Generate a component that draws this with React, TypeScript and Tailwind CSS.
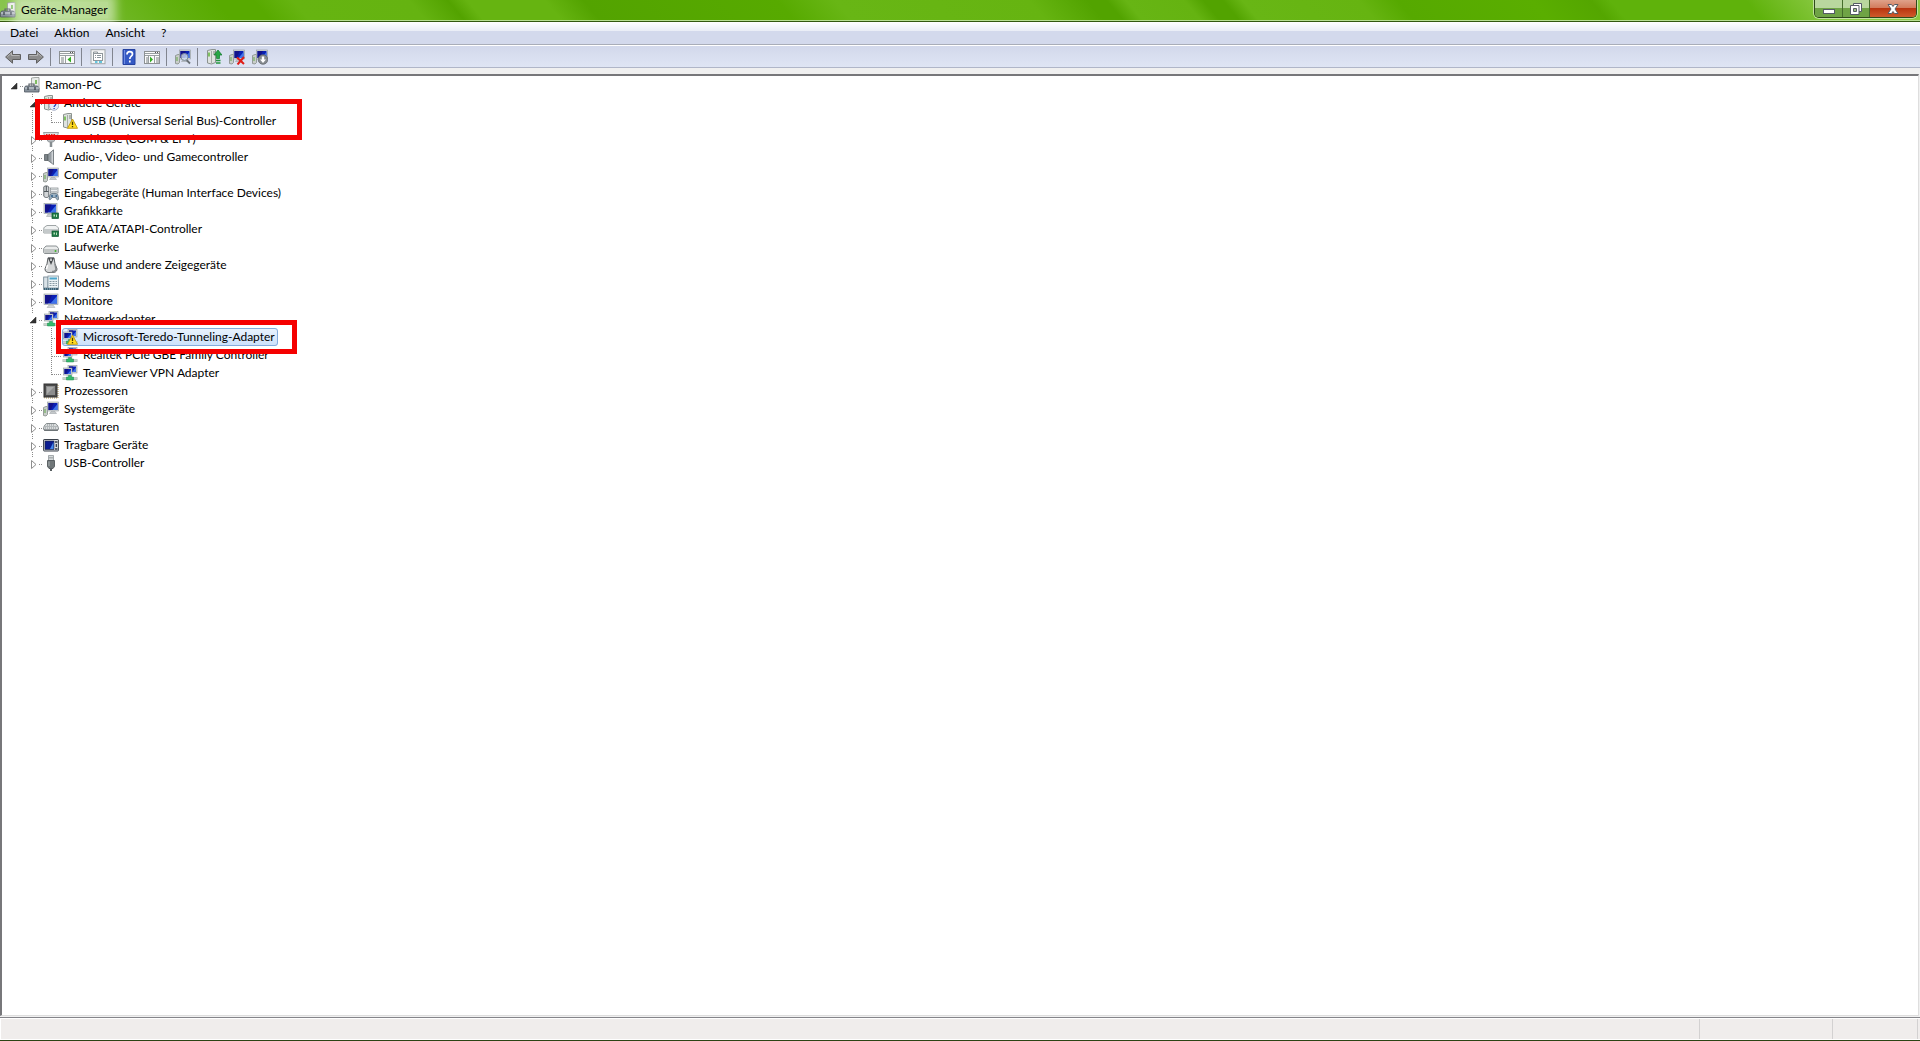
import React from 'react';

type IconName =
    | 'root' | 'unknown' | 'unknownWarn' | 'port' | 'audio' | 'computer' | 'hid' | 'display' | 'ide' | 'drive'
    | 'mouse' | 'modem' | 'monitor' | 'network' | 'networkWarn' | 'cpu' | 'keyboard' | 'portable' | 'usb'
    | 'back' | 'forward' | 'treePane' | 'properties' | 'help' | 'actionPane' | 'scan' | 'update' | 'uninstall' | 'disable';

interface TreeNode {
    label: string;
    icon: IconName;
    level: number;
    state?: 'open' | 'closed';
    last?: boolean;
    selected?: boolean;
    mark?: 'wide' | 'narrow';
}

const nodes: TreeNode[] = [
    { label: 'Ramon-PC', icon: 'root', level: 0, state: 'open' },
    { label: 'Andere Geräte', icon: 'unknown', level: 1, state: 'open' },
    { label: 'USB (Universal Serial Bus)-Controller', icon: 'unknownWarn', level: 2, last: true, mark: 'wide' },
    { label: 'Anschlüsse (COM & LPT)', icon: 'port', level: 1, state: 'closed' },
    { label: 'Audio-, Video- und Gamecontroller', icon: 'audio', level: 1, state: 'closed' },
    { label: 'Computer', icon: 'computer', level: 1, state: 'closed' },
    { label: 'Eingabegeräte (Human Interface Devices)', icon: 'hid', level: 1, state: 'closed' },
    { label: 'Grafikkarte', icon: 'display', level: 1, state: 'closed' },
    { label: 'IDE ATA/ATAPI-Controller', icon: 'ide', level: 1, state: 'closed' },
    { label: 'Laufwerke', icon: 'drive', level: 1, state: 'closed' },
    { label: 'Mäuse und andere Zeigegeräte', icon: 'mouse', level: 1, state: 'closed' },
    { label: 'Modems', icon: 'modem', level: 1, state: 'closed' },
    { label: 'Monitore', icon: 'monitor', level: 1, state: 'closed' },
    { label: 'Netzwerkadapter', icon: 'network', level: 1, state: 'open' },
    { label: 'Microsoft-Teredo-Tunneling-Adapter', icon: 'networkWarn', level: 2, selected: true, mark: 'narrow' },
    { label: 'Realtek PCIe GBE Family Controller', icon: 'network', level: 2 },
    { label: 'TeamViewer VPN Adapter', icon: 'network', level: 2, last: true },
    { label: 'Prozessoren', icon: 'cpu', level: 1, state: 'closed' },
    { label: 'Systemgeräte', icon: 'computer', level: 1, state: 'closed' },
    { label: 'Tastaturen', icon: 'keyboard', level: 1, state: 'closed' },
    { label: 'Tragbare Geräte', icon: 'portable', level: 1, state: 'closed' },
    { label: 'USB-Controller', icon: 'usb', level: 1, state: 'closed', last: true },
];

const toolbar: { label: string; icon: IconName }[][] = [
    [{ label: 'Zurück', icon: 'back' }, { label: 'Vorwärts', icon: 'forward' }],
    [{ label: 'Konsolenstruktur ein-/ausblenden', icon: 'treePane' }],
    [{ label: 'Eigenschaften', icon: 'properties' }],
    [{ label: 'Hilfe', icon: 'help' }, { label: 'Aktionsbereich ein-/ausblenden', icon: 'actionPane' }],
    [{ label: 'Nach geänderter Hardware suchen', icon: 'scan' }],
    [
        { label: 'Treibersoftware aktualisieren', icon: 'update' },
        { label: 'Deinstallieren', icon: 'uninstall' },
        { label: 'Deaktivieren', icon: 'disable' },
    ],
];

const menus = ['Datei', 'Aktion', 'Ansicht', '?'];

/* Shared icon parts */

const Screen = ({ x, y, w, h }: { x: number; y: number; w: number; h: number }) => (
    <g>
        <rect x={x} y={y} width={w} height={h} fill="#d4d8da" stroke="#92999d" strokeWidth=".6" />
        <rect x={x + 1} y={y + 1} width={w - 2} height={h - 2} fill="#0a20b4" />
        <path d={`M${x + 1} ${y + 1}h${(w - 2) * 0.6}l-${(w - 2) * 0.35} ${h - 2}h-${(w - 2) * 0.25}z`} fill="#12128a" />
        <path d={`M${x + w - 1} ${y + 2}v${h - 3}h-${(w - 2) * 0.55}z`} fill="#3f74ea" />
    </g>
);

const Tower = () => (
    <g>
        <path d="M1.500 1.500L6 .5h3.500v13l-4 1.500-4-1z" fill="#dfe3e0" stroke="#8c938f" />
        <path d="M5.500 2v12.500" stroke="#a5aca8" />
        <path d="M3 3.500v4" stroke="#5fb637" strokeWidth="1.500" />
        <path d="M7 3h2M7 5h2" stroke="#7e8782" />
    </g>
);

const MiniTower = () => (
    <g>
        <path d="M.5 6.500L3 5.500h1.500v8l-1.500 1.500-2.500-.5z" fill="#c9ceca" stroke="#848b87" strokeWidth=".8" />
        <path d="M2 8v4" stroke="#62a84b" />
    </g>
);

const Warning = () => (
    <g>
        <path d="M10.500 6L15.500 15.300h-10z" fill="#ffdc22" stroke="#c39a10" strokeWidth=".9" strokeLinejoin="round" />
        <path d="M10.500 8.800v3.200M10.500 13v1.200" stroke="#4a3a00" strokeWidth="1.300" />
    </g>
);

const Chip = () => (
    <g>
        <rect x="9" y="10" width="6.500" height="5.500" fill="#1e7b46" stroke="#0f5730" strokeWidth=".7" />
        <path d="M10.500 11.500h1.500v2h-1.500zM13 11.500h1v2.500h-1z" fill="#b8e0ba" />
    </g>
);

const Network = () => (
    <g>
        <Screen x={6} y={0.5} w={9} h={7.5} />
        <Screen x={1.5} y={3} w={8.5} h={7} />
        <path d="M4 11h5l-1-1H5z" fill="#c3c8ca" />
        <path d="M.5 13.500h15" stroke="#a3b0a8" strokeWidth="2.500" />
        <path d="M.5 13.200h15" stroke="#d8e4dc" />
        <path d="M6.500 10.500h3v1.500h2v3h-7v-3h2z" fill="#35b96c" stroke="#1d8c4c" strokeWidth=".5" />
    </g>
);

const Pane = () => (
    <g>
        <rect x=".5" y="2.500" width="15" height="12" fill="#fbfbfb" stroke="#8d9193" />
        <path d="M1 4.500h14M1 6.500h14" stroke="#999fa2" />
        <path d="M11 3.500h1M13 3.500h1" stroke="#555" />
    </g>
);

const System = () => (
    <g>
        <MiniTower />
        <Screen x={4.5} y={1} w={11} h={9} />
        <path d="M8 10.500h4l1.500 2h-7z" fill="#c4c9cb" stroke="#959b9e" strokeWidth=".5" />
    </g>
);

const art: Record<IconName, React.ReactNode> = {
    root: (
        <g>
            <path d="M7.500 1L11 .5h4v13H7.500z" fill="#e9ece9" stroke="#8f9691" strokeWidth=".8" />
            <path d="M11 3h2v4h-2z" fill="#7fbd61" />
            <path d="M5 9V7h5v2" fill="none" stroke="#5d646b" strokeWidth="1.200" />
            <path d="M1.500 9h12l1.500 2v4H.5v-4z" fill="#87919b" stroke="#4e5760" strokeWidth=".8" />
            <path d="M1 11h14" stroke="#d5dce2" />
            <path d="M4 10v3M11 10v3" stroke="#3e464e" strokeWidth="1.300" />
        </g>
    ),
    unknown: (
        <g>
            <Tower />
            <circle cx="11" cy="10.500" r="4.800" fill="#e4e9fa" stroke="#98a2bd" strokeWidth=".8" />
            <path d="M9.300 9c0-2.500 3.700-2.200 3.500 0 0 1.500-1.700 1.300-1.700 3M11.100 13v1" fill="none" stroke="#2540b5" strokeWidth="1.300" />
        </g>
    ),
    unknownWarn: <g><Tower /><Warning /></g>,
    port: (
        <g>
            <path d="M.5 1.500h15l-1.500 4.500H2z" fill="#dce0e1" stroke="#858b8e" strokeWidth=".8" />
            <path d="M3 3.500h10" stroke="#d32d26" strokeDasharray="1.500 1" />
            <path d="M4.500 6h7v4l-1.500 1H6l-1.500-1z" fill="#b7bdc0" stroke="#7c8386" strokeWidth=".7" />
            <path d="M8 11v5" stroke="#868d90" strokeWidth="2.500" />
        </g>
    ),
    audio: (
        <g>
            <path d="M1.500 5.500H5v6H1.500z" fill="#7c8388" stroke="#4c5358" strokeWidth=".7" />
            <path d="M5 5.500L10.500.8v14.800L5 11.500z" fill="#969da2" stroke="#596166" strokeWidth=".7" />
            <path d="M8.500 3l1.500-1v13l-1.500-2z" fill="#cfd4d7" />
        </g>
    ),
    computer: <System />,
    hid: (
        <g>
            <path d="M.8 2c0-1.500 4.500-1.500 5 0v9c0 2-4.500 2-5 0z" fill="#d3d6d8" stroke="#53595d" strokeWidth=".9" />
            <path d="M3.300 1v5M1 6.500h4.500" stroke="#4f565a" />
            <rect x="7.500" y="3" width="7.500" height="5" fill="#eceeef" stroke="#7c8488" strokeWidth=".7" />
            <path d="M8.500 4.500h6M8.500 6.500h6" stroke="#8e969a" strokeDasharray="1 1" />
            <path d="M6 14l1-4.500c1.500-1.500 6.500-1.500 7.800 0l.9 4.500c-1 2-2.200.5-3-1.500H9c-1 2-2.300 3-3 1.500z" fill="#9db2c2" stroke="#5c6d7a" strokeWidth=".8" />
            <path d="M8 11h2M12.500 11h1.500" stroke="#2c5d89" strokeWidth="1.300" />
        </g>
    ),
    display: (
        <g>
            <Screen x={1} y={0.5} w={13} h={10} />
            <path d="M5 11h4l1 2.500H3.500z" fill="#cbd0d2" stroke="#999fa2" strokeWidth=".5" />
            <Chip />
        </g>
    ),
    ide: (
        <g>
            <path d="M1.500 6L4 4.500h9L15.500 7v5H.8V7z" fill="#f0f2f2" stroke="#888f91" strokeWidth=".8" />
            <path d="M1 8h14v4H1z" fill="#c4c9ca" />
            <Chip />
        </g>
    ),
    drive: (
        <g>
            <path d="M.7 9.500L3 7h10.500l2 2.500v4l-1 1H1.500l-.8-1z" fill="#e9ebeb" stroke="#6f7678" strokeWidth=".8" />
            <path d="M1 10h14v4H1.500z" fill="#c1c5c5" />
            <path d="M12.500 11v2" stroke="#49b637" strokeWidth="1.600" />
        </g>
    ),
    mouse: (
        <g>
            <path d="M5 .8h6l1 6 2 5c0 4-4 4-6 3.500-2 .5-6 .5-6-3.500l2-5z" fill="#d6d8d9" stroke="#4b4f52" strokeWidth=".9" />
            <path d="M5 1l3 7 3-7z" fill="#474b4e" />
            <path d="M8 1.500v2.500" stroke="#e8eaeb" strokeWidth="1.500" />
            <path d="M12 7l1 5c0 2-2 2.500-4 2.500" fill="none" stroke="#85898c" strokeWidth="1.500" />
            <path d="M4.500 8l-1 4" stroke="#fff" strokeWidth="1.500" />
        </g>
    ),
    modem: (
        <g>
            <rect x=".7" y="2" width="4.300" height="11" fill="#d9e2e7" stroke="#687d8a" strokeWidth=".8" />
            <rect x="5" y="1" width="10.500" height="12" fill="#edf3f6" stroke="#7e929e" strokeWidth=".8" />
            <path d="M6.500 3.500h7.500" stroke="#4ba6cd" strokeWidth="2" />
            <path d="M6.500 6.500h7.500M6.500 8.500h7.500M6.500 10.500h7.500" stroke="#8799a3" strokeDasharray="2 1" />
            <path d="M.5 14h15" stroke="#3f5d6f" strokeWidth="2" />
            <path d="M2 14h12" stroke="#9acbe0" strokeDasharray="1 1" />
        </g>
    ),
    monitor: (
        <g>
            <Screen x={1} y={1} w={14} h={10.5} />
            <path d="M6 12h4l2 2.500H4z" fill="#d2d6d8" stroke="#a0a6a9" strokeWidth=".5" />
        </g>
    ),
    network: <Network />,
    networkWarn: <g><Network /><Warning /></g>,
    cpu: (
        <g>
            <rect x="1.500" y="1.500" width="13.500" height="13.500" fill="none" stroke="#b0934d" strokeDasharray="1 1" />
            <rect x="1" y="1" width="13" height="13" fill="#4c4c4c" stroke="#333" />
            <path d="M3 3h9v9H3z" fill="#8c8d8d" />
            <path d="M4 4h7L4 11z" fill="#aaabab" />
        </g>
    ),
    keyboard: (
        <g>
            <path d="M3.500 4.500h9c2 1.500 3 3.500 3 5.500l-1 1.500h-13L.5 10c0-2 1-4 3-5.500z" fill="#d9dcdd" stroke="#6b7275" strokeWidth=".8" />
            <path d="M4 6h8M2.500 7.500h11M2 9h12" stroke="#8b9295" strokeDasharray="1 1" />
            <path d="M1 11h14" stroke="#565d60" />
        </g>
    ),
    portable: (
        <g>
            <rect x=".6" y="2.500" width="14.800" height="11.500" rx=".5" fill="#dcdfe4" stroke="#3b414b" />
            <rect x="2" y="4" width="9" height="8.500" fill="#0b1c91" stroke="#1e263d" strokeWidth=".6" />
            <path d="M7 12l3.500-7v7z" fill="#4589ea" />
            <path d="M12 5h2.500M13.300 7v3M12 12h2.500" stroke="#333b47" strokeWidth="1.300" />
        </g>
    ),
    usb: (
        <g>
            <path d="M5.500.5h5V6h-5z" fill="#d6dadb" stroke="#90979a" strokeWidth=".8" />
            <path d="M7 2v1.500M9 2v1.500" stroke="#7c8386" />
            <path d="M4.500 5.500h7v6L10 13.500H6l-1.500-2z" fill="#6f7678" stroke="#464d50" strokeWidth=".8" />
            <path d="M6 6.500v4.500" stroke="#aab0b2" />
            <path d="M8 13.500V16" stroke="#565d60" strokeWidth="2" />
        </g>
    ),
    back: (
        <g>
            <path d="M.6 8L7.500 1.800V5.500h8v5h-8v3.700z" fill="#8c8c8c" stroke="#606060" strokeLinejoin="round" />
            <path d="M2.500 7.500l4-3.500v2.500h8" fill="none" stroke="#b5b5b5" />
        </g>
    ),
    forward: (
        <g>
            <path d="M15.400 8L8.500 1.800V5.500h-8v5h8v3.700z" fill="#8c8c8c" stroke="#606060" strokeLinejoin="round" />
            <path d="M1.500 6.500h8V4l4 3.500" fill="none" stroke="#b5b5b5" />
        </g>
    ),
    treePane: (
        <g>
            <Pane />
            <path d="M2 9h3M2 11h3M2 13h3" stroke="#7d8386" />
            <path d="M6.500 7v7" stroke="#999fa2" />
            <path d="M12 7.500v6L8.500 10.500z" fill="#33ad22" />
        </g>
    ),
    properties: (
        <g>
            <rect x="1" y=".7" width="14" height="14" fill="#f5f6f6" stroke="#a1a7aa" />
            <rect x="3.500" y="4.500" width="9" height="7" fill="#fff" stroke="#8f979b" />
            <path d="M3.500 4.500V3h4v1.500M5 6.500h1M5 8.500h1" fill="none" stroke="#8f979b" />
            <path d="M7 6.500h4M7 8.500h4" stroke="#8a969c" />
            <path d="M5 13h2.500M9 13h3" stroke="#36b6d6" strokeWidth="1.300" />
        </g>
    ),
    help: (
        <g>
            <path d="M2 .5h12v15H2z" fill="#3459c4" stroke="#2542a0" />
            <path d="M3.500 1v14" stroke="#6d8be2" />
            <path d="M6 5.500c0-4 5.500-3.500 5.500-.5 0 2.300-2.700 2-2.700 5M8.800 11.500v2" fill="none" stroke="#fff" strokeWidth="1.700" />
        </g>
    ),
    actionPane: (
        <g>
            <Pane />
            <path d="M2 9h2M2 11h2M2 13h2M12 9h3M12 11h3M12 13h3" stroke="#7d8386" />
            <path d="M4.500 7v7M10.500 7v7" stroke="#999fa2" />
            <path d="M6 7.500v6l3-3z" fill="#33ad22" />
        </g>
    ),
    scan: (
        <g>
            <System />
            <path d="M11.500 11l3.500 3.500" stroke="#686f75" strokeWidth="1.800" />
            <circle cx="9.500" cy="8" r="3.500" fill="#cfdcee" fillOpacity=".8" stroke="#7e8b99" />
        </g>
    ),
    update: (
        <g>
            <Tower />
            <path d="M12 1l4 5h-2.500v3.500h-3V6H8z" fill="#27a745" stroke="#137a2c" strokeWidth=".7" />
            <path d="M10 11.500h4.500M10 14h4.500" stroke="#24963e" strokeWidth="1.500" />
        </g>
    ),
    uninstall: (
        <g>
            <System />
            <path d="M8 8.500l7 6.500M15 8l-6.500 7.500" stroke="#e01d17" strokeWidth="2" />
        </g>
    ),
    disable: (
        <g>
            <System />
            <circle cx="11" cy="10.500" r="4.800" fill="#858a8e" stroke="#5d6266" strokeWidth=".7" />
            <path d="M9.800 7.500h2.400V10.500H14l-3 3.500-3-3.500h1.800z" fill="#fff" />
        </g>
    ),
};

const Icon = ({ name }: { name: IconName }) => (
    <svg viewBox="0 0 16 16" className="size-4 shrink-0" aria-hidden="true">{art[name]}</svg>
);

// Dotted guide line that runs past a row below an expanded parent
const Guide = ({ visible }: { visible: boolean }) => (
    <svg viewBox="0 0 19 18" className="h-[18px] w-[19px] shrink-0" aria-hidden="true">
        {visible && <path d="M8.500 0v18" stroke="#8a8a8a" strokeDasharray="1 1" />}
    </svg>
);

const Joint = ({ node }: { node: TreeNode }) => (
    <svg viewBox="0 0 19 18" className="h-[18px] w-[19px]" aria-hidden="true">
        <g stroke="#8a8a8a" strokeDasharray="1 1">
            {!node.state && <path d={node.last ? 'M8.500 0v11' : 'M8.500 0v18'} />}
            {!node.state && <path d="M9 10.500h10" />}
            {node.state && node.level > 0 && <path d="M8.500 0v3" />}
            {node.state && node.level > 0 && !node.last && <path d="M8.500 16v2" />}
            {node.state && <path d="M15 10.500h4" />}
        </g>
        {node.state === 'open' && <path d="M6 13h6V7z" fill="#333" stroke="#222" strokeWidth=".5" />}
        {node.state === 'closed' && <path d="M7.500 6.500v8l4.500-4z" fill="#fff" stroke="#8e8e8e" />}
    </svg>
);

const TreeRow = ({ node }: { node: TreeNode }) => (
    <li className="relative flex h-[18px] items-center pl-[3px]">
        {node.level > 0 && <Guide visible={false} />}
        {node.level > 1 && <Guide visible />}
        {node.state ? (
            <button type="button" aria-label={`${node.label} umschalten`}><Joint node={node} /></button>
        ) : (
            <Joint node={node} />
        )}
        <span
            className={
                node.selected
                    ? 'flex h-[18px] items-center rounded-[3px] bg-linear-to-b from-[#eaf3fd] to-[#cbe1fb] pr-[3px] outline-1 -outline-offset-1 outline-[#84acdd]'
                    : 'flex h-[18px] items-center'
            }
        >
            <Icon name={node.icon} />
            <span className="pl-[5px] whitespace-nowrap">{node.label}</span>
        </span>
        {node.mark === 'wide' && (
            <span className="absolute -top-[13px] left-[33px] z-10 h-[41px] w-[267px] border-5 border-[#f50000]" />
        )}
        {node.mark === 'narrow' && (
            <span className="absolute -top-[8px] left-[54px] z-10 h-[34px] w-[241px] border-5 border-[#f50000]" />
        )}
    </li>
);

const TitleBar = () => (
    <header className="flex h-[22px] shrink-0 items-start justify-between border-b border-[#33590f] bg-[linear-gradient(50deg,#8cc653_0%,#62b00f_9%,#58aa00_12%,#58aa00_14%,#66b411_16%,#65b311_22%,#53a300_24%,#53a300_24%,#66b411_25%,#66b411_29%,#53a300_31%,#57aa00_41%,#68b615_44%,#66b411_54%,#52a300_57%,#52a300_58%,#67b514_59%,#65b311_62%,#52a300_63%,#52a300_64%,#68b615_65%,#66b411_71%,#56a900_73%,#5aae00_80%,#54a600_83%,#5fb20b_84%,#5fb20b_91%,#8ac943_95%,#8ac943_100%)]">
        <div className="flex h-[21px] min-w-0 flex-1 items-center border-b border-[#b7df91]">
            <Icon name="root" />
            <h1 className="ml-[5px] bg-white/50 shadow-[0_0_10px_8px_rgba(255,255,255,.5)]">Geräte-Manager</h1>
        </div>
        <div className="flex h-[21px] border-b border-[#b7df91] pr-[3px]">
            <div className="flex h-[18px] overflow-hidden rounded-b-[5px] border border-t-0 border-[#2f4a1b] shadow-[0_0_0_1px_rgba(255,255,255,.5)]">
                <button type="button" aria-label="Minimieren" className="flex w-7 items-center justify-center border-r border-[#456d2b] bg-linear-to-b from-[#b9d79e] from-50% to-[#6fa345] to-50%">
                    <svg viewBox="0 0 12 12" className="size-3" aria-hidden="true">
                        <rect x=".5" y="6.500" width="11" height="4" fill="#fff" stroke="#555b66" />
                    </svg>
                </button>
                <button type="button" aria-label="Verkleinern" className="flex w-[27px] items-center justify-center border-r border-[#456d2b] bg-linear-to-b from-[#b9d79e] from-50% to-[#6fa345] to-50%">
                    <svg viewBox="0 0 12 12" className="size-3" aria-hidden="true">
                        <path d="M3.500.5h8v8h-8z" fill="#fff" stroke="#555b66" />
                        <path d="M.5 2.500h8.500v9H.5z" fill="#fff" stroke="#555b66" />
                        <path d="M3.500 5.500h3v3h-3z" fill="#9fc47f" stroke="#555b66" />
                    </svg>
                </button>
                <button type="button" aria-label="Schließen" className="flex w-[46px] items-center justify-center bg-[linear-gradient(#dfa28a_0%,#d27a5a_48%,#b93510_50%,#cf5a2b_100%)]">
                    <svg viewBox="0 0 12 12" className="size-3" aria-hidden="true">
                        <path d="M1 1.500h3.500L6 3.500l1.500-2H11L8 6l3 4.500H7.500L6 8.500l-1.500 2H1L4 6z" fill="#fff" stroke="#555b66" />
                    </svg>
                </button>
            </div>
        </div>
    </header>
);

export default function App() {
    return (
        <div className="flex h-screen flex-col overflow-hidden bg-[#f0f0f0] font-['Lato','Noto_Sans',sans-serif] text-[12px] leading-4 text-black">
            <TitleBar />

            <nav className="flex h-[23px] shrink-0 items-center border-b border-[#a9adb8] bg-[linear-gradient(#ffffff_0px,#e9edf6_9px,#d3d9ec_9px,#d3d9ec_100%)] pl-[2px]">
                {menus.map((menu) => (
                    <button key={menu} type="button" className="px-2">{menu}</button>
                ))}
            </nav>

            <div role="toolbar" className="flex h-[23px] shrink-0 items-center border-t border-b border-t-white border-b-[#b0b6c8] bg-linear-to-b from-[#d2d8eb] to-[#dfe5f4] pl-px">
                {toolbar.map((group, i) => (
                    <div key={i} className="flex items-center">
                        {i > 0 && <span className="mx-[3px] h-[18px] w-[2px] border-l border-[#81858f]" />}
                        {group.map((item) => (
                            <button key={item.icon} type="button" title={item.label} className="flex h-5 w-[23px] items-center justify-center">
                                <Icon name={item.icon} />
                            </button>
                        ))}
                    </div>
                ))}
            </div>

            <main className="mt-[6px] mr-px flex-1 overflow-hidden border-t-2 border-r border-b border-l-2 border-t-[#77777a] border-r-[#dedede] border-b-[#dedede] border-l-[#77777a] bg-white">
                <ul>
                    {nodes.map((node) => <TreeRow key={node.label} node={node} />)}
                </ul>
            </main>

            <footer className="mt-px flex h-[24px] shrink-0 border-t border-b border-t-[#85858a] border-b-[#2c4314] bg-white py-px">
                <div className="ml-px flex-1 border-r border-[#d3d1d1] bg-[#f0edec]" />
                <div className="w-[133px] border-r border-[#d3d1d1] bg-[#f0edec]" />
                <div className="w-[85px] border-r border-[#d3d1d1] bg-[#f0edec]" />
                <div className="w-[2px] bg-[#f0edec]" />
            </footer>
        </div>
    );
}
